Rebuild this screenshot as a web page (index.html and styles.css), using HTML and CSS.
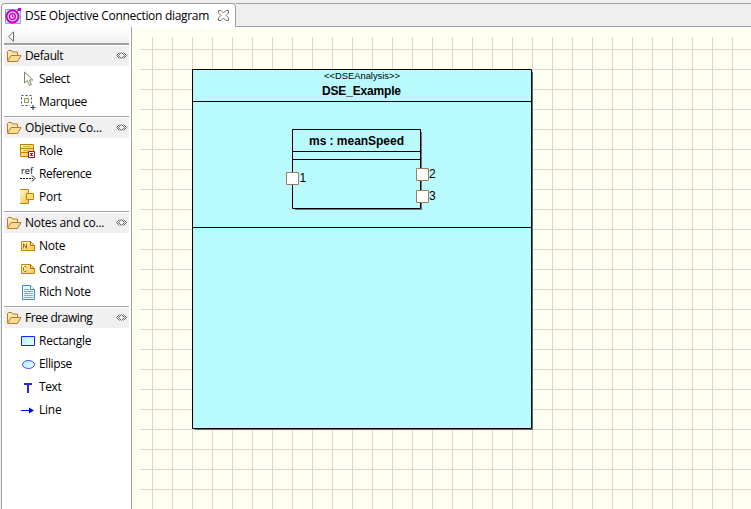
FILE: index.html
```
<!DOCTYPE html>
<html lang="en">
<head>
<meta charset="utf-8">
<title>DSE Objective Connection diagram</title>
<link rel="stylesheet" href="styles.css">
</head>
<body>
<svg width="0" height="0" class="defs">
  <defs>
    <linearGradient id="gold" x1="0" y1="0" x2="1" y2="1"><stop offset="0" stop-color="#fff9d5"/><stop offset="1" stop-color="#f5c04a"/></linearGradient>
    <linearGradient id="cyan" x1="0" y1="0" x2="1" y2="1"><stop offset="0" stop-color="#a8f0ff"/><stop offset="1" stop-color="#f0fcff"/></linearGradient>
    <symbol id="folder" viewBox="0 0 16 14">
      <path d="M1.500 11.500V2.500l1-1h3l1 1.500h5v3" fill="#fbe6b0" stroke="#b97a2b"/>
      <path d="M1.500 12.500L5 6.500h10l-3.500 6z" fill="#fbdc93" stroke="#b97a2b"/>
    </symbol>
    <symbol id="pin" viewBox="0 0 11 7">
      <path d="M3.500 .5l-3 3 3 3M7.500 .5l3 3-3 3M5.500 .5l-3 3 3 3 3-3z" fill="none" stroke="#666"/>
    </symbol>
  </defs>
</svg>
<div class="window">
  <header class="tabs">
    <div class="tab">
      <svg class="tab-icon" width="16" height="16" viewBox="0 0 16 16">
        <path d="M.5 1.500h15v14H.5z" fill="#d5e5fb" stroke="#87a6d8"/>
        <circle cx="7.500" cy="8.500" r="6" fill="#f3dcff" stroke="#c400c8" stroke-width="2"/>
        <circle cx="7.500" cy="8.500" r="3" fill="none" stroke="#c400c8" stroke-width="1.300"/>
        <path d="M7.500 7v2h2M12 3l2-2" fill="none" stroke="#c400c8"/><path d="M13 0h3v3h-3z" fill="#c400c8"/>
      </svg>
      <span class="tab-title">DSE Objective Connection diagram</span>
      <svg class="close" width="11" height="11" viewBox="0 0 11 11"><path d="M.5 .5h2.500l2.500 2.500L8 .5h2.500V3L8 5.500l2.500 2.500v2.500H8L5.500 8 3 10.500H.5V8L3 5.500.5 3z" fill="#fff" stroke="#666" stroke-width=".9"/></svg>
    </div>
    <div class="tab-rest"></div>
  </header>
  <main class="editor">
    <aside class="palette">
      <div class="collapse"><svg width="7" height="11" viewBox="0 0 7 11"><path d="M5.500 .8v9.400L.8 5.500z" fill="#fff" stroke="#666"/></svg></div>
      <section class="group">
        <h2><svg width="16" height="14"><use href="#folder"/></svg><span class="tight">Default</span><svg class="pin" width="11" height="7"><use href="#pin"/></svg></h2>
        <ul>
          <li><svg width="16" height="16" viewBox="0 0 16 16"><path d="M4.500 1v11l2.800-2.500 2.200 5 2-1-2.200-4.500h3.500z" fill="#fff" stroke="#86806a"/></svg><span class="tight">Select</span></li>
          <li><svg width="16" height="16" viewBox="0 0 16 16"><path d="M1.500 1.500h10v10h-10z" fill="none" stroke="#36526e" stroke-dasharray="2 2"/><path d="M4.500 4.500h4v4h-4z" fill="#f5f1df" stroke="#9c9258"/><path d="M10 10h6v6h-6z" fill="#fff"/><path d="M10.500 13.500h5M13 11v5" stroke="#24486e" stroke-width="1.200"/></svg><span class="tight">Marquee</span></li>
        </ul>
      </section>
      <section class="group">
        <h2><svg width="16" height="14"><use href="#folder"/></svg><span class="wide">Objective Co...</span><svg class="pin" width="11" height="7"><use href="#pin"/></svg></h2>
        <ul>
          <li><svg width="16" height="16" viewBox="0 0 16 16"><path d="M.5 1.500h13v12H.5zM.5 5.500h13M.5 9.500h13" fill="url(#gold)" stroke="#b08500"/><path d="M3 3.500h8M3 7.500h6" stroke="#d5ad45"/><path d="M8.500 8.500h6v6h-6z" fill="#fff" stroke="#c00018"/><path d="M10 10.500h3M10 12.500h3M11.500 10v3" stroke="#c00018"/></svg><span>Role</span></li>
          <li><svg width="16" height="16" viewBox="0 0 16 16"><text x="1" y="8" class="ref" textLength="12" lengthAdjust="spacingAndGlyphs">ref</text><path d="M0 12.500h13" stroke="#111" stroke-dasharray="2 1"/><path d="M12 9.500l3 3-3 3" fill="none" stroke="#111"/></svg><span class="tighter">Reference</span></li>
          <li><svg width="16" height="16" viewBox="0 0 16 16"><path d="M0 .5h8.500v14H0" fill="url(#gold)" stroke="#bd8900"/><path d="M6.500 4.500h7v6h-7z" fill="#ffdd70" stroke="#bd8900"/></svg><span>Port</span></li>
        </ul>
      </section>
      <section class="group">
        <h2><svg width="16" height="14"><use href="#folder"/></svg><span>Notes and co...</span><svg class="pin" width="11" height="7"><use href="#pin"/></svg></h2>
        <ul>
          <li><svg width="16" height="16" viewBox="0 0 16 16"><path d="M1.500 3.500h9l4 4v5h-13z" fill="url(#gold)" stroke="#c08b00"/><path d="M10.500 3.500v4h4M3.500 10.500v-5l3 5v-5" fill="none" stroke="#a47800"/></svg><span>Note</span></li>
          <li><svg width="16" height="16" viewBox="0 0 16 16"><path d="M1.500 3.500h9l4 4v5h-13z" fill="url(#gold)" stroke="#c08b00"/><path d="M10.500 3.500v4h4M7 6.500l-1-1H4.500l-1 1v3l1 1H6l1-1" fill="none" stroke="#a47800"/></svg><span class="tight">Constraint</span></li>
          <li><svg width="16" height="16" viewBox="0 0 16 16"><path d="M2.500 1.500h8l4 4v10h-12z" fill="#eaf6ff" stroke="#3f8cc0"/><path d="M10.500 1.500v4h4" fill="#fff" stroke="#3f8cc0"/><path d="M4 5.500h5M4 7.500h9M4 9.500h9M4 11.500h9M4 13.500h9" stroke="#8aa8bf"/></svg><span>Rich Note</span></li>
        </ul>
      </section>
      <section class="group">
        <h2><svg width="16" height="14"><use href="#folder"/></svg><span class="tighter">Free drawing</span><svg class="pin" width="11" height="7"><use href="#pin"/></svg></h2>
        <ul>
          <li><svg width="16" height="16" viewBox="0 0 16 16"><path d="M1.500 3.500h13v9h-13z" fill="url(#cyan)" stroke="#2020ff"/></svg><span>Rectangle</span></li>
          <li><svg width="16" height="16" viewBox="0 0 16 16"><ellipse cx="8.500" cy="8.500" rx="6" ry="4" fill="url(#cyan)" stroke="#4646f0"/></svg><span class="tight">Ellipse</span></li>
          <li><svg width="16" height="16" viewBox="0 0 16 16"><path d="M4 5h8M8 4v10" stroke="#2525ee" stroke-width="2"/></svg><span class="tight">Text</span></li>
          <li><svg width="16" height="16" viewBox="0 0 16 16"><path d="M1 8.500h10" stroke="#0000f5"/><path d="M9 5.500l5 3-5 3z" fill="#0000f5"/></svg><span>Line</span></li>
        </ul>
      </section>
    </aside>
    <div class="canvas">
      <div class="grid"></div>
      <svg class="diagram" width="619" height="480" viewBox="132 29 619 480">
        <path d="M532.500 72v357.500M195 429.500h338" stroke="#4d7274" fill="none"/>
        <g fill="#b9faff" stroke="#000">
          <path d="M192.500 69.500h339v359h-339zM192.500 101.500h339M192.500 227.500h339"/>
          <path d="M421.500 132v77.500M295 209.500h127" stroke="#5c7d80" fill="none"/>
          <path d="M292.500 129.500h128v79h-128zM292.500 151.500h128M292.500 159.500h128"/>
        </g>
        <g fill="#fff" stroke="#9b805c">
          <path d="M286.500 172.500h12v12h-12zM416.500 168.500h12v12h-12zM416.500 190.500h12v12h-12z"/>
        </g>
        <g class="labels">
          <text x="324" y="79" class="stereotype" textLength="76" lengthAdjust="spacingAndGlyphs">&lt;&lt;DSEAnalysis&gt;&gt;</text>
          <text x="322" y="95" class="name" textLength="79">DSE_Example</text>
          <text x="309" y="145" class="name" textLength="95">ms : meanSpeed</text>
          <text x="299.500" y="182">1</text><text x="429" y="178">2</text><text x="429" y="200">3</text>
        </g>
      </svg>
    </div>
  </main>
</div>
</body>
</html>
```
FILE: styles.css
```
* { box-sizing: border-box; }
body { margin: 0; background: #efefef; color: #000; font: 12px/16px "Open Sans", "Noto Sans", sans-serif; overflow: hidden; }
.defs { display: block; height: 0; }
.window { width: 751px; height: 509px; padding: 3px 0 0 1px; display: flex; flex-direction: column; }
.tabs { display: flex; height: 24px; flex: none; }
.tab { width: 235px; display: flex; align-items: center; padding-left: 3px; background: #fff; border: 1px solid #a0a0a0; border-bottom: 0; border-radius: 4px 4px 0 0; }
.tab-icon { margin-top: 1px; }
.tab-title { width: 189px; margin-left: 4px; white-space: nowrap; letter-spacing: -.3px; padding-top: 1px; }
.close { margin-left: 4px; }
.tab-rest { flex: 1; border: solid #a0a0a0; border-width: 1px 0; }
.editor { flex: 1; display: flex; min-height: 0; background: #fff; border-left: 1px solid #a0a0a0; }
.palette { width: 130px; flex: none; padding: 1px 1px 0 2px; border-right: 1px solid #a0a0a0; }
.collapse { height: 16px; padding: 3px 0 0 4px; width: 125px; border-bottom: 1px solid #a0a0a0; background: linear-gradient(#fff, #efefef); }
.collapse svg, .group svg { display: block; flex: none; }
.group { width: 125px; border-top: 1px solid #a0a0a0; padding: 1px 0 2px; }
.group h2 { display: flex; align-items: center; height: 20px; margin: 0 0 2px; padding: 0 2px; background: #f0f0f0; font: inherit; }
.group h2 span { margin-left: 3px; white-space: nowrap; }
.group .pin { margin: 0 0 1px auto; }
ul { margin: 0; padding: 0; list-style: none; }
li { height: 23px; padding: 0 0 1px 16px; display: flex; align-items: center; white-space: nowrap; }
li span { margin-left: 3px; }
li span, .group h2 span { letter-spacing: -.25px; }
li .tight, .group h2 .tight { letter-spacing: -.38px; }
li .tighter, .group h2 .tighter { letter-spacing: -.45px; }
.group h2 .wide { letter-spacing: -.18px; }
.ref { font: 9px "Open Sans", sans-serif; }
.canvas { flex: 1; background: #fffff0; border-top: 2px solid #fff; display: grid; }
.canvas > * { grid-area: 1 / 1; }
.grid { margin: 8px 0 0 8px; background: repeating-linear-gradient(90deg, transparent 0 12px, #d8d8d0 12px 13px, transparent 13px 20px), repeating-linear-gradient(transparent 0 12px, #d8d8d0 12px 13px, transparent 13px 20px); }
.diagram { display: block; z-index: 1; }
.labels { font: 12px "Liberation Sans", sans-serif; }
.stereotype { font-size: 9.5px; }
.name { font-weight: bold; }
```
